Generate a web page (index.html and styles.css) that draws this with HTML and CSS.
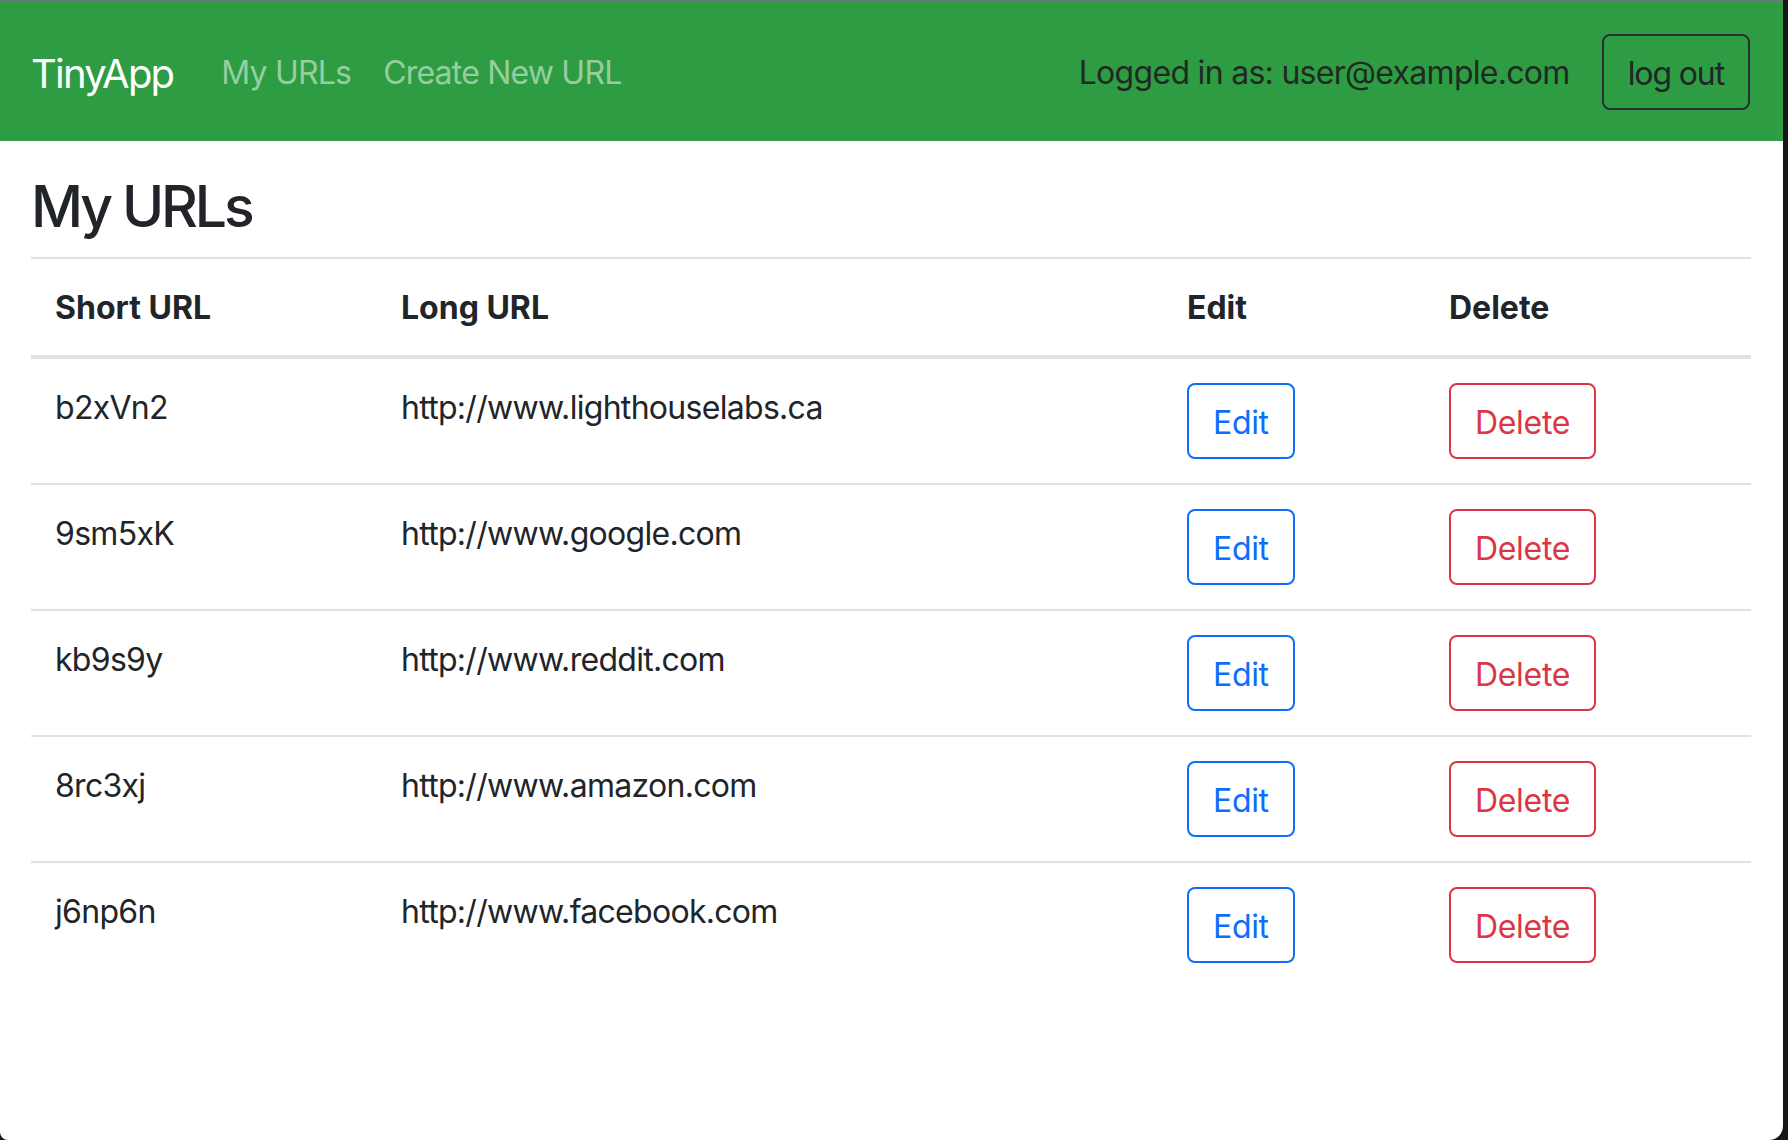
FILE: index.html
```html
<!DOCTYPE html>
<html lang="en">
<head>
<meta charset="utf-8">
<title>TinyApp</title>
<link rel="stylesheet" href="styles.css">
</head>
<body>
<div class="window">
  <nav class="navbar">
    <a class="brand" href="#">TinyApp</a>
    <ul class="nav">
      <li><a class="nav-link" href="#">My URLs</a></li>
      <li><a class="nav-link" href="#">Create New URL</a></li>
    </ul>
    <div class="user">
      <span class="navbar-text">Logged in as: user@example.com</span>
      <button class="btn btn-dark">log out</button>
    </div>
  </nav>
  <main class="container">
    <h2 class="title">My URLs</h2>
    <table class="table">
      <colgroup>
        <col class="c-short"><col class="c-long"><col class="c-edit"><col class="c-del">
      </colgroup>
      <thead>
        <tr><th>Short URL</th><th>Long URL</th><th>Edit</th><th>Delete</th></tr>
      </thead>
      <tbody>
        <tr><td>b2xVn2</td><td>http://www.lighthouselabs.ca</td><td><button class="btn btn-blue">Edit</button></td><td><button class="btn btn-red">Delete</button></td></tr>
        <tr><td>9sm5xK</td><td>http://www.google.com</td><td><button class="btn btn-blue">Edit</button></td><td><button class="btn btn-red">Delete</button></td></tr>
        <tr><td>kb9s9y</td><td>http://www.reddit.com</td><td><button class="btn btn-blue">Edit</button></td><td><button class="btn btn-red">Delete</button></td></tr>
        <tr><td>8rc3xj</td><td>http://www.amazon.com</td><td><button class="btn btn-blue">Edit</button></td><td><button class="btn btn-red">Delete</button></td></tr>
        <tr><td>j6np6n</td><td>http://www.facebook.com</td><td><button class="btn btn-blue">Edit</button></td><td><button class="btn btn-red">Delete</button></td></tr>
      </tbody>
    </table>
  </main>
</div>
</body>
</html>
```

FILE: styles.css
```css
html, body {
  margin: 0;
  padding: 0;
  height: 100%;
}

body {
  background: #161616;
  font-family: "Inter", "Roboto", "Liberation Sans", sans-serif;
  color: #212529;
  letter-spacing: -0.044em;
}

.window {
  width: 1783px;
  height: 1140px;
  background: #ffffff;
  border-top: 2px solid #6f767c;
  box-sizing: border-box;
  border-bottom-left-radius: 8px;
  border-bottom-right-radius: 14px;
  overflow: hidden;
}

.navbar {
  display: flex;
  align-items: center;
  height: 139px;
  padding: 0 33px 0 31px;
  background: #2e9c42;
}

.brand {
  font-size: 40px;
  letter-spacing: -0.045em;
  color: #ffffff;
  text-decoration: none;
  margin-right: 32px;
  line-height: 1.5;
  padding-top: 4px;
}

.nav {
  display: flex;
  list-style: none;
  margin: 0;
  padding: 0;
}

.nav-link {
  display: block;
  padding: 3px 16px 0;
  font-size: 32px;
  line-height: 48px;
  letter-spacing: -0.025em;
  color: #96cea0;
  text-decoration: none;
}

.user {
  margin-left: auto;
  display: flex;
  align-items: center;
  gap: 32px;
}

.navbar-text {
  font-size: 32px;
  line-height: 48px;
  padding-top: 3px;
  color: #1f2a23;
}

.btn {
  font-family: inherit;
  font-size: 32px;
  line-height: 48px;
  letter-spacing: -0.01em;
  padding: 14px 24px 10px;
  border: 2px solid;
  border-radius: 8px;
  background: transparent;
  cursor: pointer;
}

.btn-dark {
  color: #212529;
  border-color: #2a2f33;
  letter-spacing: -0.035em;
}

.btn-blue {
  color: #0d6efd;
  border-color: #0d6efd;
}

.btn-red {
  color: #dc3545;
  border-color: #dc3545;
}

.container {
  padding: 0 32px 0 31px;
}

.title {
  font-size: 57px;
  font-weight: 500;
  letter-spacing: -0.055em;
  line-height: 1.2;
  margin: 32px 0 16px;
  color: #212529;
}

.table {
  width: 100%;
  border-collapse: collapse;
  table-layout: fixed;
  border-top: 2px solid #dee2e6;
}

.c-short { width: 346px; }
.c-long { width: 786px; }
.c-edit { width: 262px; }
.c-del { width: 326px; }

.table th,
.table td {
  padding: 25px 24px 23px;
  text-align: left;
  vertical-align: top;
  font-size: 32px;
  line-height: 48px;
}

.table td:nth-child(3),
.table td:nth-child(4) {
  padding-top: 24px;
  padding-bottom: 24px;
}

.table th {
  font-weight: 700;
  letter-spacing: 0;
  border-bottom: 4px solid #dee2e6;
}

.table tbody td {
  font-weight: 400;
  border-bottom: 2px solid #dee2e6;
}

.table tbody tr:last-child td {
  border-bottom: none;
}
```
